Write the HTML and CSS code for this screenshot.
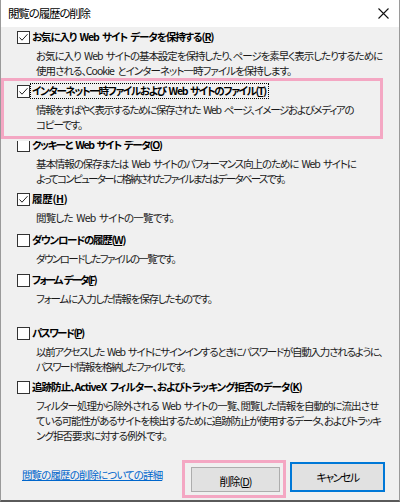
FILE: index.html
```html
<!DOCTYPE html>
<html lang="ja">
<head>
<meta charset="utf-8">
<link rel="stylesheet" href="styles.css">
</head>
<body>
<div class="window">
  <div class="titlebar">
    <span class="title">閲覧の履歴の削除</span>
    <svg class="close" width="11" height="11" viewBox="0 0 11 11"><path d="M0.5 0.5L10.5 10.5M10.5 0.5L0.5 10.5" stroke="#111" stroke-width="1.1" fill="none"/></svg>
  </div>
  <div class="content">
    <div class="item g4">
      <div class="label"><span class="cb"><svg width="13" height="13" viewBox="0 0 13 13"><rect x="0.5" y="0.5" width="12" height="12" fill="#fff" stroke="#333"/><path d="M2.5 6.5L5 9.2L10.5 3.2" stroke="#222" stroke-width="1" fill="none"/></svg></span><span class="text ls-108">お気に入り Web サイト データを保持する(<u>R</u>)</span></div>
      <div class="desc"><span class="ln ls-104">お気に入り Web サイトの基本設定を保持したり、ページを素早く表示したりするために</span><span class="ln ls-096">使用される、Cookie とインターネット一時ファイルを保持します。</span></div>
    </div>
    <div class="item g4">
      <div class="label"><span class="cb"><svg width="13" height="13" viewBox="0 0 13 13"><rect x="0.5" y="0.5" width="12" height="12" fill="#fff" stroke="#333"/><path d="M2.5 6.5L5 9.2L10.5 3.2" stroke="#222" stroke-width="1" fill="none"/></svg></span><span class="text focus ls-134">インターネット一時ファイルおよび Web サイトのファイル(<u>T</u>)</span></div>
      <div class="desc"><span class="ln ls-132">情報をすばやく表示するために保存された Web ページ、イメージおよびメディアの</span><span class="ln ls-113">コピーです。</span></div>
    </div>
    <div class="item g4">
      <div class="label"><span class="cb"><svg width="13" height="13" viewBox="0 0 13 13"><rect x="0.5" y="0.5" width="12" height="12" fill="#fff" stroke="#333"/></svg></span><span class="text ls-134">クッキーと Web サイト データ(<u>O</u>)</span></div>
      <div class="desc"><span class="ln ls-111">基本情報の保存または Web サイトのパフォーマンス向上のために Web サイトに</span><span class="ln ls-174">よってコンピューターに格納されたファイルまたはデータベースです。</span></div>
    </div>
    <div class="item g6">
      <div class="label"><span class="cb"><svg width="13" height="13" viewBox="0 0 13 13"><rect x="0.5" y="0.5" width="12" height="12" fill="#fff" stroke="#333"/><path d="M2.5 6.5L5 9.2L10.5 3.2" stroke="#222" stroke-width="1" fill="none"/></svg></span><span class="text ls-029">履歴(<u>H</u>)</span></div>
      <div class="desc"><span class="ln ls-078">閲覧した Web サイトの一覧です。</span></div>
    </div>
    <div class="item g5">
      <div class="label"><span class="cb"><svg width="13" height="13" viewBox="0 0 13 13"><rect x="0.5" y="0.5" width="12" height="12" fill="#fff" stroke="#333"/></svg></span><span class="text ls-131">ダウンロードの履歴(<u>W</u>)</span></div>
      <div class="desc"><span class="ln ls-156">ダウンロードしたファイルの一覧です。</span></div>
    </div>
    <div class="item g18">
      <div class="label"><span class="cb"><svg width="13" height="13" viewBox="0 0 13 13"><rect x="0.5" y="0.5" width="12" height="12" fill="#fff" stroke="#333"/></svg></span><span class="text ls-200">フォーム データ(<u>F</u>)</span></div>
      <div class="desc"><span class="ln ls-120">フォームに入力した情報を保存したものです。</span></div>
    </div>
    <div class="item g4">
      <div class="label"><span class="cb"><svg width="13" height="13" viewBox="0 0 13 13"><rect x="0.5" y="0.5" width="12" height="12" fill="#fff" stroke="#333"/></svg></span><span class="text ls-160">パスワード(<u>P</u>)</span></div>
      <div class="desc"><span class="ln ls-126">以前アクセスした Web サイトにサインインするときにパスワードが自動入力されるように、</span><span class="ln ls-151">パスワード情報を格納したファイルです。</span></div>
    </div>
    <div class="item">
      <div class="label"><span class="cb"><svg width="13" height="13" viewBox="0 0 13 13"><rect x="0.5" y="0.5" width="12" height="12" fill="#fff" stroke="#333"/></svg></span><span class="text ls-094">追跡防止、ActiveX フィルター、およびトラッキング拒否のデータ(<u>K</u>)</span></div>
      <div class="desc"><span class="ln ls-100">フィルター処理から除外される Web サイトの一覧、閲覧した情報を自動的に流出させ</span><span class="ln ls-110">ている可能性があるサイトを検出するために追跡防止が使用するデータ、およびトラッキ</span><span class="ln ls-094">ング拒否要求に対する例外です。</span></div>
    </div>
    <div class="highlight hl-top"></div>
  </div>
  <div class="footer">
    <a class="link" href="#">閲覧の履歴の削除についての詳細</a>
    <div class="buttons">
      <div class="btn-wrap">
        <span class="btn delete">削除(<u>D</u>)</span>
        <div class="highlight hl-btn"></div>
      </div>
      <span class="btn cancel">キャンセル</span>
    </div>
  </div>
</div>
</body>
</html>
```

FILE: styles.css
```css
html, body {
  margin: 0;
  padding: 0;
}
body {
  width: 400px;
  height: 502px;
  overflow: hidden;
  font-family: "Noto Sans CJK JP", "Noto Sans", sans-serif;
  font-size: 10.5px;
  font-feature-settings: "palt";
  color: #000;
  background: #f0f0f0;
}
.window {
  width: 400px;
  height: 502px;
  box-sizing: border-box;
  border-left: 1px solid #9a9a9a;
  border-right: 1px solid #9a9a9a;
  border-bottom: 2px solid #5a5a5a;
  display: flex;
  flex-direction: column;
  background: #f0f0f0;
}
.titlebar {
  height: 27px;
  background: #fff;
  display: flex;
  align-items: center;
  justify-content: space-between;
  padding: 0 10px 0 7px;
  flex: none;
}
.title {
  font-size: 11.5px;
  letter-spacing: -1.15px;
  color: #000;
  line-height: 27px;
}
.close {
  display: block;
  margin-top: -1px;
}
.content {
  position: relative;
  padding: 1px 0 0 16px;
  display: flex;
  flex-direction: column;
  flex: none;
  height: 415px;
  box-sizing: border-box;
}
.item {
  display: flex;
  flex-direction: column;
}
.g4 { margin-bottom: 4px; }
.g5 { margin-bottom: 5px; }
.g6 { margin-bottom: 6px; }
.g18 { margin-bottom: 18px; }
.label {
  display: flex;
  align-items: center;
  height: 18px;
  line-height: 18px;
  font-weight: bold;
  word-spacing: 2px;
  white-space: nowrap;
  margin-bottom: 2px;
}
.cb {
  width: 13px;
  height: 13px;
  display: block;
  flex: none;
}
.cb svg { display: block; }
.text {
  padding: 0 2px 0 1px;
  border: 1px solid transparent;
  line-height: 14px;
}
.text.focus {
  border: 1px dotted #000;
}
u {
  text-decoration: underline;
  text-underline-offset: 1px;
}
.desc {
  padding-left: 19px;
  line-height: 15px;
  word-spacing: 2px;
  white-space: nowrap;
  color: #1a1a1a;
}
.ln { display: block; }

.ls-029 { letter-spacing: -0.29px; }
.ls-078 { letter-spacing: -0.78px; }
.ls-094 { letter-spacing: -0.94px; }
.ls-096 { letter-spacing: -0.96px; }
.ls-100 { letter-spacing: -1.00px; }
.ls-104 { letter-spacing: -1.04px; }
.ls-108 { letter-spacing: -1.08px; }
.ls-110 { letter-spacing: -1.10px; }
.ls-111 { letter-spacing: -1.11px; }
.ls-113 { letter-spacing: -1.13px; }
.ls-120 { letter-spacing: -1.20px; }
.ls-126 { letter-spacing: -1.26px; }
.ls-131 { letter-spacing: -1.31px; }
.ls-132 { letter-spacing: -1.32px; }
.ls-134 { letter-spacing: -1.34px; }
.ls-151 { letter-spacing: -1.51px; }
.ls-156 { letter-spacing: -1.56px; }
.ls-160 { letter-spacing: -1.60px; }
.ls-174 { letter-spacing: -1.74px; }
.ls-200 { letter-spacing: -2.00px; }

.highlight {
  position: absolute;
  border: 3px solid #f4a7c3;
  box-sizing: border-box;
  pointer-events: none;
}
.hl-top {
  left: 0;
  top: 51px;
  width: 382px;
  height: 61px;
  box-shadow: 0 2px 0 #f0f0f0;
}
.footer {
  flex: 1;
  display: flex;
  align-items: flex-start;
  justify-content: space-between;
  padding: 0 14px 0 21px;
}
.link {
  color: #0066cc;
  text-decoration: underline;
  line-height: 15px;
  letter-spacing: -0.89px;
  white-space: nowrap;
  margin-top: 25px;
}
.buttons {
  display: flex;
  gap: 10px;
  align-items: flex-end;
  margin-top: 20px;
  height: 30px;
}
.btn-wrap {
  position: relative;
}
.btn {
  display: flex;
  align-items: center;
  justify-content: center;
  box-sizing: border-box;
  background: #e1e1e1;
  border: 1px solid #adadad;
  color: #000;
  font-size: 11px;
  letter-spacing: -1px;
}
.delete {
  width: 89px;
  height: 25px;
  padding-top: 2px;
}
.cancel {
  width: 95px;
  height: 30px;
  border: 1px solid #0078d7;
  box-shadow: inset 0 0 0 1px #0078d7;
  padding-bottom: 1px;
  letter-spacing: -1.5px;
}
.hl-btn {
  left: -9px;
  top: -7px;
  width: 104px;
  height: 38px;
}
```
